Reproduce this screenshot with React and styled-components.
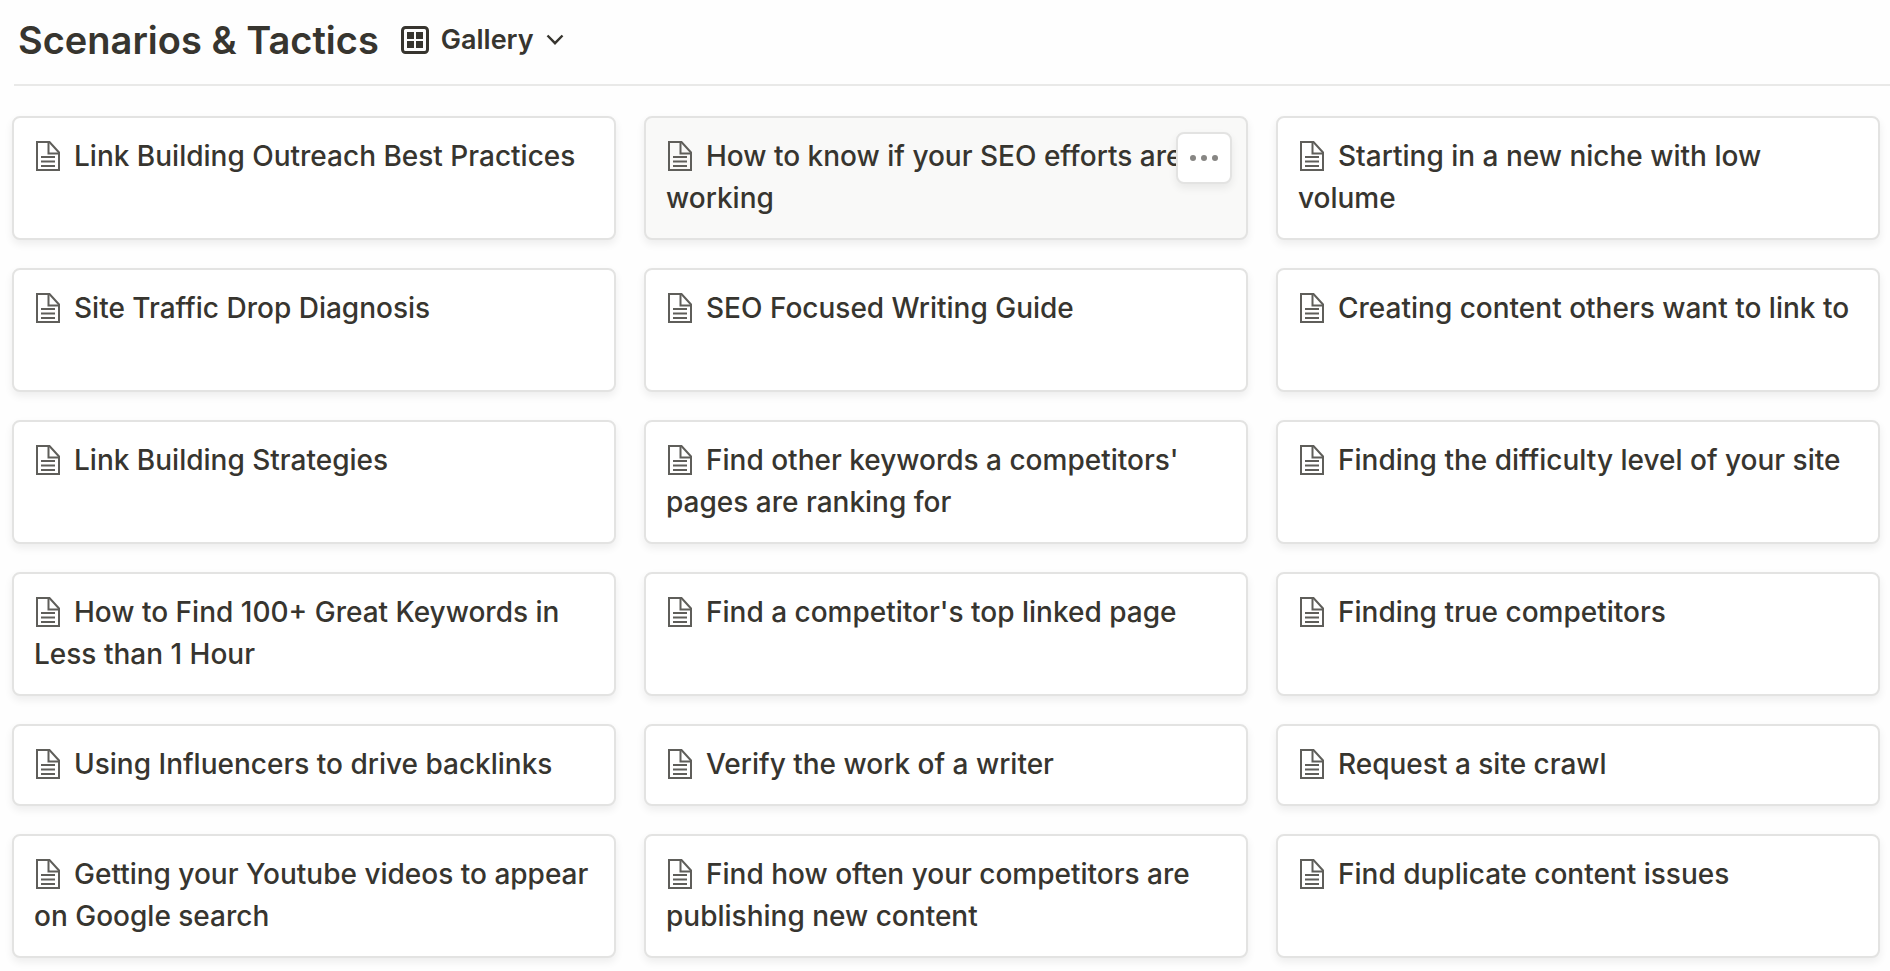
import styled, { createGlobalStyle } from 'styled-components'

const pages = [
  { title: 'Link Building Outreach Best Practices' },
  { title: 'How to know if your SEO efforts are working', active: true },
  { title: 'Starting in a new niche with low volume' },
  { title: 'Site Traffic Drop Diagnosis', tall: true },
  { title: 'SEO Focused Writing Guide', tall: true },
  { title: 'Creating content others want to link to', tall: true },
  { title: 'Link Building Strategies' },
  { title: "Find other keywords a competitors' pages are ranking for" },
  { title: 'Finding the difficulty level of your site' },
  { title: 'How to Find 100+ Great Keywords in Less than 1 Hour' },
  { title: "Find a competitor's top linked page" },
  { title: 'Finding true competitors' },
  { title: 'Using Influencers to drive backlinks' },
  { title: 'Verify the work of a writer' },
  { title: 'Request a site crawl' },
  { title: 'Getting your Youtube videos to appear on Google search' },
  { title: 'Find how often your competitors are publishing new content' },
  { title: 'Find duplicate content issues' },
]

const GalleryIcon = () => (
  <svg width='28' height='28' viewBox='0 0 28 28' aria-hidden='true'>
    <rect x='1.5' y='1.5' width='25' height='25' rx='3' fill='none' stroke='currentColor' strokeWidth='3' />
    <path d='M6 6h7v7H6zM15 6h7v7h-7zM6 15h7v7H6zM15 15h7v7h-7z' fill='currentColor' />
  </svg>
)

const ChevronIcon = () => (
  <svg width='18' height='12' viewBox='0 0 18 12' aria-hidden='true'>
    <path d='M1.5 1.5L9 9.2l7.5-7.7' fill='none' stroke='currentColor' strokeWidth='2.4' />
  </svg>
)

const DotsIcon = () => (
  <svg width='28' height='8' viewBox='0 0 28 8' fill='currentColor' aria-hidden='true'>
    <circle cx='3' cy='4' r='3' />
    <circle cx='14' cy='4' r='3' />
    <circle cx='25' cy='4' r='3' />
  </svg>
)

const Card = ({ title, active, tall }) => (
  <CardItem $active={active} $tall={tall}>
    <CardLink href='#'>
      <PageIcon viewBox='0 0 24 30' aria-hidden='true'>
        <path d='M1 1h12.5L23 11.5V29H1z' />
        <path d='M12.5 1v11.5H23' />
        <path d='M5 16h14M5 20.5h14M5 25h14' />
      </PageIcon>
      {title}
    </CardLink>
    {active && (
      <MoreButton type='button' aria-label='More actions'>
        <DotsIcon />
      </MoreButton>
    )}
  </CardItem>
)

const App = () => {
  return (
    <>
      <GlobalStyle />
      <Header>
        <Title>Scenarios &amp; Tactics</Title>
        <ViewButton type='button'>
          <GalleryIcon />
          Gallery
          <ChevronIcon />
        </ViewButton>
      </Header>
      <Gallery>
        {pages.map((page) => (
          <Card key={page.title} {...page} />
        ))}
      </Gallery>
    </>
  )
}

const GlobalStyle = createGlobalStyle`
  * {
    box-sizing: border-box;
  }
  body {
    margin: 0;
    background: #fefefe;
    color: #37352f;
    font-family: Inter, 'Liberation Sans', sans-serif;
  }
`

const Header = styled.header`
  display: flex;
  align-items: center;
  gap: 22px;
  height: 86px;
  margin-left: 14px;
  padding: 0 4px 4px;
  border-bottom: 2px solid #e9e9e8;
`

const Title = styled.h1`
  margin: 0;
  font-size: 38px;
  font-weight: 600;
  line-height: 48px;
`

const ViewButton = styled.button`
  display: flex;
  align-items: center;
  gap: 12px;
  padding: 0;
  border: 0;
  background: transparent;
  color: inherit;
  font-family: inherit;
  font-size: 27px;
  font-weight: 600;
  line-height: 42px;
  cursor: pointer;
`

const Gallery = styled.ul`
  display: grid;
  grid-template-columns: repeat(3, minmax(0, 1fr));
  gap: 28px;
  margin: 0;
  padding: 30px 10px 13px 12px;
  list-style: none;
`

const CardItem = styled.li`
  position: relative;
  min-height: ${({ $tall }) => ($tall ? '124px' : '82px')};
  border: 2px solid #e3e3e2;
  border-radius: 8px;
  background: ${({ $active }) => ($active ? '#f9f9f8' : '#fff')};
  box-shadow: 0 4px 8px rgba(15, 15, 15, 0.07);
`

const CardLink = styled.a`
  display: block;
  height: 100%;
  padding: 17px 20px 19px;
  color: inherit;
  font-size: 28px;
  font-weight: 500;
  line-height: 42px;
  text-decoration: none;
`

const PageIcon = styled.svg`
  width: 24px;
  height: 30px;
  margin: 0 14px 0 2px;
  vertical-align: -5px;
  fill: none;
  stroke: #5f5e5a;
  stroke-width: 2;
`

const MoreButton = styled.button`
  position: absolute;
  top: 14px;
  right: 14px;
  display: flex;
  align-items: center;
  justify-content: center;
  width: 56px;
  height: 52px;
  padding: 0;
  border: 2px solid #e3e3e2;
  border-radius: 8px;
  background: #fff;
  box-shadow: 0 4px 8px rgba(15, 15, 15, 0.07);
  color: #878683;
  cursor: pointer;
`

export default App
